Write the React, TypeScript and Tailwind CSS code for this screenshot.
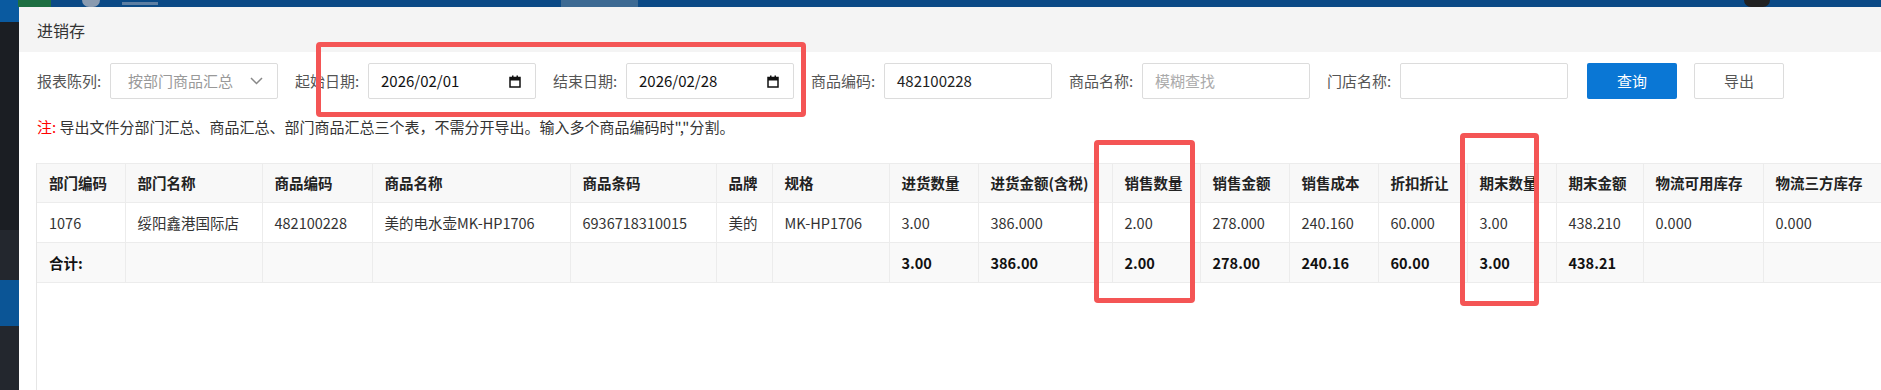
import React from "react";

const cols = [88, 137, 110, 198, 146, 56, 117, 89, 134, 88, 89, 89, 89, 89, 87, 120, 120];

const heads = [
  "部门编码",
  "部门名称",
  "商品编码",
  "商品名称",
  "商品条码",
  "品牌",
  "规格",
  "进货数量",
  "进货金额(含税)",
  "销售数量",
  "销售金额",
  "销售成本",
  "折扣折让",
  "期末数量",
  "期末金额",
  "物流可用库存",
  "物流三方库存",
];

const row = [
  "1076",
  "绥阳鑫港国际店",
  "482100228",
  "美的电水壶MK-HP1706",
  "6936718310015",
  "美的",
  "MK-HP1706",
  "3.00",
  "386.000",
  "2.00",
  "278.000",
  "240.160",
  "60.000",
  "3.00",
  "438.210",
  "0.000",
  "0.000",
];

const totals = ["合计:", "", "", "", "", "", "", "3.00", "386.00", "2.00", "278.00", "240.16", "60.00", "3.00", "438.21", "", ""];

function CalendarIcon() {
  return (
    <svg width="12" height="13" viewBox="0 0 12 13" className="shrink-0">
      <rect x="1" y="2.5" width="10" height="9.5" fill="none" stroke="#111" strokeWidth="1.5" />
      <rect x="1" y="2.5" width="10" height="3" fill="#111" />
      <rect x="3" y="0.5" width="1.5" height="2.5" fill="#111" />
      <rect x="7.5" y="0.5" width="1.5" height="2.5" fill="#111" />
    </svg>
  );
}

function Label({ children }: { children: React.ReactNode }) {
  return <span className="mr-[9px] w-[64px] shrink-0 whitespace-nowrap text-[15px] text-[#555]">{children}</span>;
}

function Box({ children, className = "" }: { children?: React.ReactNode; className?: string }) {
  return (
    <div className={"flex h-[36px] w-[168px] shrink-0 items-center rounded-[2px] border border-[#dcdcdc] bg-white pl-[12px] pr-[14px] text-[15px] " + className}>
      {children}
    </div>
  );
}

function RedBox({ className }: { className: string }) {
  return <div className={"pointer-events-none absolute rounded-[4px] border-[5px] border-[#f45555] " + className} />;
}

export default function App() {
  return (
    <div
      className="relative h-[390px] w-[1881px] overflow-hidden bg-[#1c1f24]"
      style={{ fontFamily: '"Noto Sans CJK SC", "Noto Sans", sans-serif' }}
    >
      {/* top bar of the host window */}
      <div className="flex h-[7px] items-stretch bg-[#0b4a86]">
        <div className="w-[18px] bg-[#0a5aa0]" />
        <div className="w-[33px] bg-[#1d6f42]" />
        <div className="ml-[31px] h-[7px] w-[18px] rounded-b-full bg-[#8a9bb0]" />
        <div className="ml-[22px] mt-[2px] h-[3px] w-[36px] bg-[#5d7fa3]" />
        <div className="ml-[403px] w-[77px] bg-[#3d6a93]" />
        <div className="ml-[1106px] h-[7px] w-[26px] rounded-b-full bg-[#222]" />
      </div>

      <div className="flex h-[383px]">
        {/* left strip */}
        <div className="flex w-[19px] shrink-0 flex-col">
          <div className="h-[15px] bg-[#0a5aa0]" />
          <div className="h-[208px] bg-[#1b1e23]" />
          <div className="h-[50px] bg-[#23272e]" />
          <div className="h-[46px] bg-[#0b5596]" />
          <div className="flex-1 bg-[#23272e]" />
        </div>

        {/* panel */}
        <div className="flex min-w-0 flex-1 flex-col bg-white">
          <div className="flex h-[45px] shrink-0 items-center bg-[#f4f4f4] pl-[18px] text-[16px] text-[#333]">进销存</div>

          <div className="mt-[11px] flex h-[36px] items-center pl-[18px]">
            <Label>报表陈列:</Label>
            <Box className="justify-between pl-[17px] text-[#999]">
              <span>按部门商品汇总</span>
              <svg width="13" height="8" viewBox="0 0 13 8">
                <polyline points="1,1 6.5,6.5 12,1" fill="none" stroke="#888" strokeWidth="1.5" />
              </svg>
            </Box>

            <div className="ml-[17px] flex items-center">
              <Label>起始日期:</Label>
              <Box className="justify-between text-[#111]">
                <span>2026/02/01</span>
                <CalendarIcon />
              </Box>
            </div>

            <div className="ml-[17px] flex items-center">
              <Label>结束日期:</Label>
              <Box className="justify-between text-[#111]">
                <span>2026/02/28</span>
                <CalendarIcon />
              </Box>
            </div>

            <div className="ml-[17px] flex items-center">
              <Label>商品编码:</Label>
              <Box className="text-[#222]">482100228</Box>
            </div>

            <div className="ml-[17px] flex items-center">
              <Label>商品名称:</Label>
              <Box className="text-[#aaa]">模糊查找</Box>
            </div>

            <div className="ml-[17px] flex items-center">
              <Label>门店名称:</Label>
              <Box />
            </div>

            <button className="ml-[19px] flex h-[36px] w-[90px] items-center justify-center rounded-[2px] bg-[#0a77d5] text-[15px] text-white">
              查询
            </button>
            <button className="ml-[17px] flex h-[36px] w-[90px] items-center justify-center rounded-[2px] border border-[#dcdcdc] bg-white text-[15px] text-[#555]">
              导出
            </button>
          </div>

          <div className="mt-[18px] pl-[18px] text-[15px] leading-[20px] text-[#333]">
            <span className="text-[#f00]">注:</span> 导出文件分部门汇总、商品汇总、部门商品汇总三个表，不需分开导出。输入多个商品编码时","分割。
          </div>

          <div className="ml-[17px] mt-[26px] flex-1 overflow-hidden border-l border-[#e6e6e6]">
            <table className="table-fixed border-collapse text-[14.5px]" style={{ width: cols.reduce((a, b) => a + b, 0) }}>
              <colgroup>
                {cols.map((w, i) => (
                  <col key={i} style={{ width: w }} />
                ))}
              </colgroup>
              <thead>
                <tr className="h-[39px] bg-[#f8f8f8]">
                  {heads.map((h, i) => (
                    <th key={i} className="whitespace-nowrap border border-l-0 border-[#ececec] pl-[12px] text-left font-bold text-[#222]">
                      {h}
                    </th>
                  ))}
                </tr>
              </thead>
              <tbody>
                <tr className="h-[40px] bg-white">
                  {row.map((c, i) => (
                    <td key={i} className="whitespace-nowrap border border-l-0 border-[#ececec] pl-[12px] text-[#333]">
                      {c}
                    </td>
                  ))}
                </tr>
                <tr className="h-[40px] bg-[#f9f9f9]">
                  {totals.map((c, i) => (
                    <td key={i} className="whitespace-nowrap border border-l-0 border-[#ececec] pl-[12px] font-bold text-[#111]">
                      {c}
                    </td>
                  ))}
                </tr>
              </tbody>
            </table>
          </div>
        </div>
      </div>

      {/* annotation boxes drawn on the screenshot */}
      <RedBox className="left-[316px] top-[42px] h-[75px] w-[490px]" />
      <RedBox className="left-[1094px] top-[140px] h-[163px] w-[101px]" />
      <RedBox className="left-[1460px] top-[133px] h-[173px] w-[79px]" />
    </div>
  );
}
